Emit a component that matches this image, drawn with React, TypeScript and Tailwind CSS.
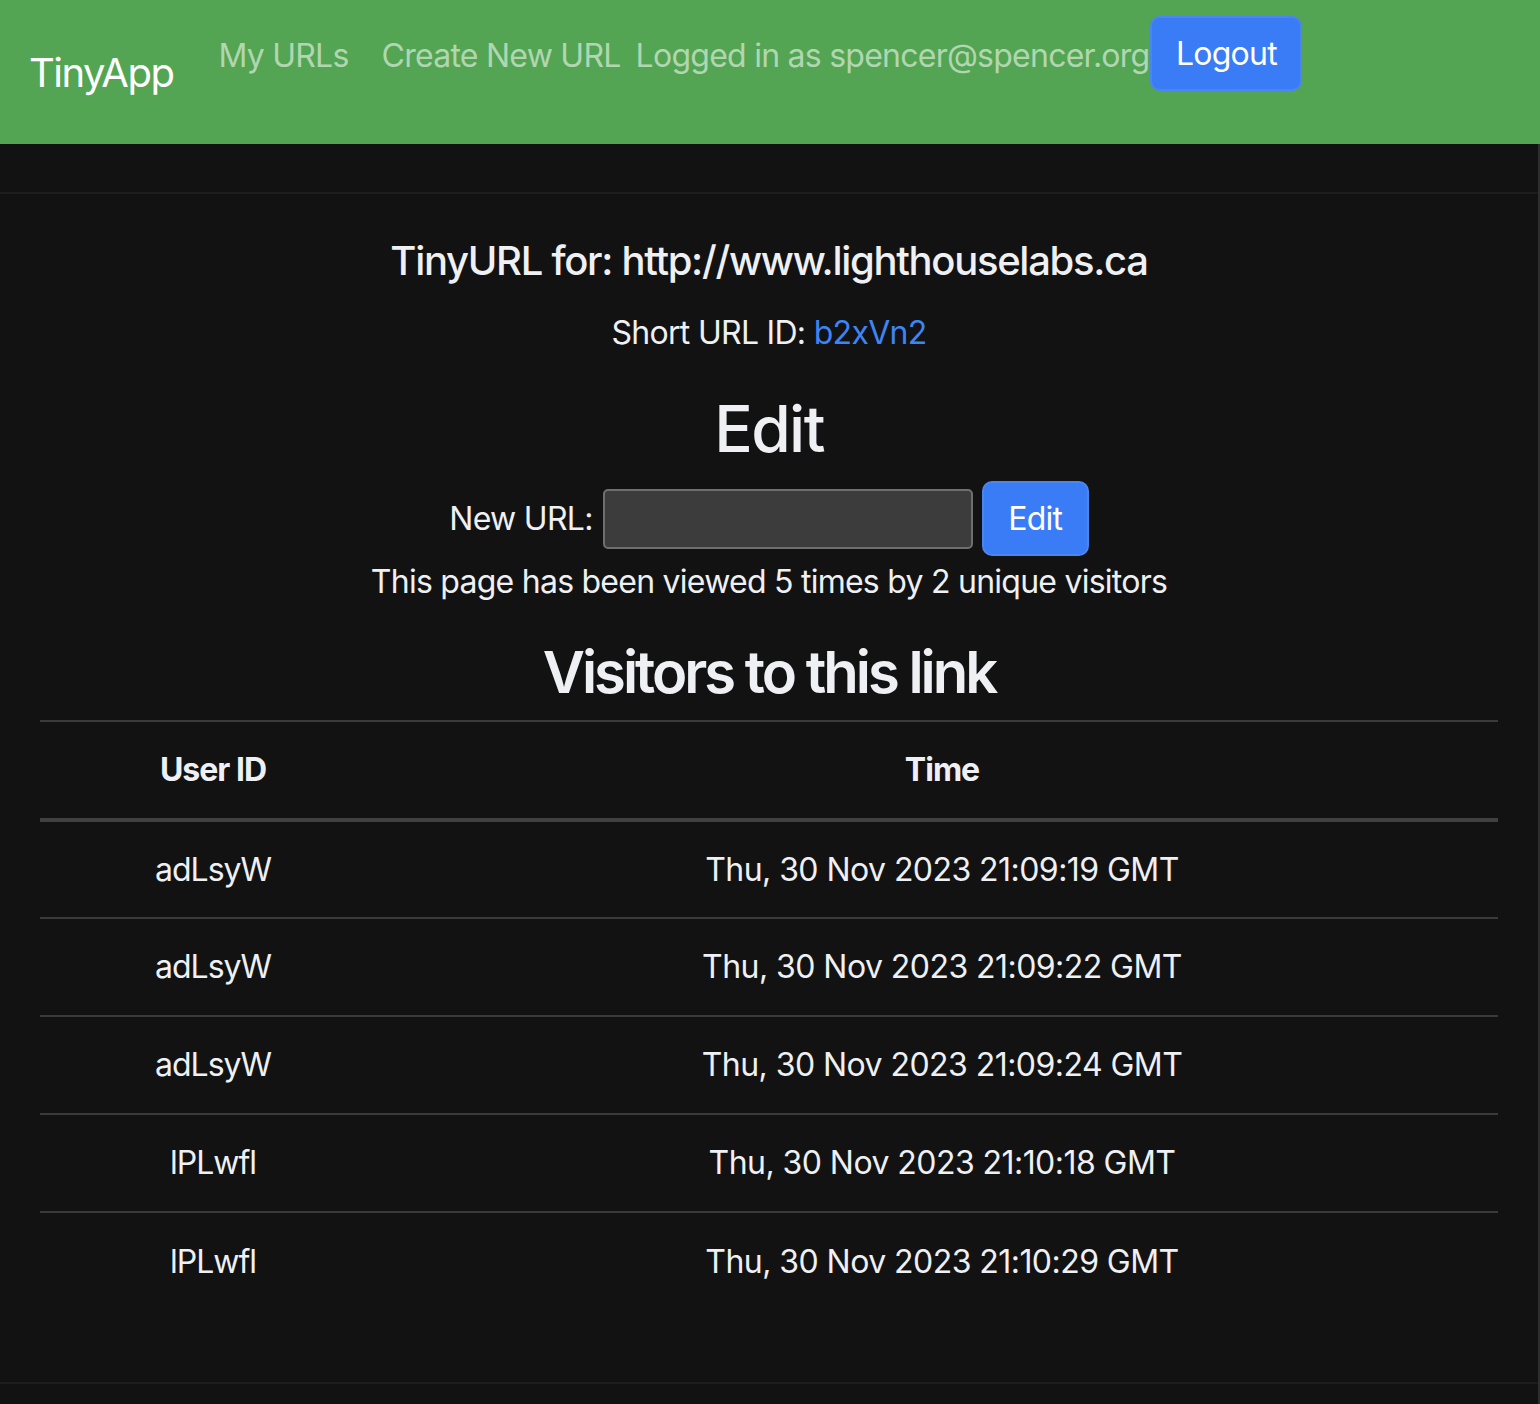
import React from "react";

const rows = [
  ["adLsyW", "Thu, 30 Nov 2023 21:09:19 GMT"],
  ["adLsyW", "Thu, 30 Nov 2023 21:09:22 GMT"],
  ["adLsyW", "Thu, 30 Nov 2023 21:09:24 GMT"],
  ["lPLwfl", "Thu, 30 Nov 2023 21:10:18 GMT"],
  ["lPLwfl", "Thu, 30 Nov 2023 21:10:29 GMT"],
];

export default function App() {
  return (
    <div
      className="min-h-[1404px] w-[1540px] bg-[#121212] text-[#eef0f4]"
      style={{ fontFamily: "Inter, 'Noto Sans', sans-serif" }}
    >
      <nav className="flex h-[144px] items-start bg-[#53a553] pt-[16px]">
        <div className="ml-[29px] self-center text-[40px] leading-[60px] text-white -mt-[14px] tracking-[-1.5px]">
          TinyApp
        </div>
        <div className="ml-[45px] flex items-start text-[32px] leading-[48px] text-[#b1d6b1] tracking-[-0.75px]">
          <a className="py-[16px]">My URLs</a>
          <a className="ml-[33px] py-[16px]">Create New URL</a>
          <span className="ml-[15px] py-[16px]">Logged in as spencer@spencer.org</span>
          <button className="ml-[1px] h-[75px] w-[152px] rounded-[10px] border-2 border-[#4a86f2] bg-[#3a7cf6] text-[32px] leading-[48px] text-white">
            Logout
          </button>
        </div>
      </nav>
      <div className="flex min-h-[1260px] flex-col rounded-tl-[8px] border-r-2 border-[#2e2e2e] bg-[#121212]">
        <div className="h-[50px] border-b-2 border-[#1c1c1c]"></div>
        <div className="flex flex-1 flex-col items-center px-[40px] pb-[72px]">
          <h5 className="mt-[43px] text-[40px] font-medium leading-[48px] tracking-[-1.3px]">
            TinyURL for: http://www.lighthouselabs.ca
          </h5>
          <p className="mt-[24px] text-[32px] leading-[48px] tracking-[-0.7px]">
            Short URL ID: <a className="text-[#3d85f5]">b2xVn2</a>
          </p>
          <h2 className="mt-[33px] text-[64px] font-medium leading-[77px] tracking-[-1.6px]">Edit</h2>
          <div className="mt-[14px] flex items-center">
            <label className="text-[32px] leading-[48px] tracking-[-0.7px]">New URL:</label>
            <input
              className="ml-[10px] h-[60px] w-[370px] rounded-[5px] border-2 border-[#6f6f6f] bg-[#3c3c3c] outline-none"
              type="text"
            />
            <button className="ml-[9px] h-[75px] w-[107px] rounded-[10px] border-2 border-[#4a86f2] bg-[#3a7cf6] text-[32px] leading-[48px] text-white tracking-[-0.7px]">
              Edit
            </button>
          </div>
          <p className="mt-[2px] text-[32px] leading-[48px] tracking-[-0.75px]">
            This page has been viewed 5 times by 2 unique visitors
          </p>
          <h2 className="mt-[31px] text-[58px] font-semibold leading-[70px] tracking-[-3px]">
            Visitors to this link
          </h2>
          <table className="mt-[13px] w-full border-collapse text-[32px] leading-[48px] tracking-[-0.55px]">
            <thead>
              <tr className="h-[99px] border-t-2 border-b-4 border-[#3a3a3a] border-b-[#404040]">
                <th className="w-[346px] text-center font-bold tracking-[-1px]">User ID</th>
                <th className="text-center font-bold tracking-[-1px]">Time</th>
              </tr>
            </thead>
            <tbody>
              {rows.map((r, i) => (
                <tr
                  key={i}
                  className={i < rows.length - 1 ? "h-[98px] border-b-2 border-[#3a3a3a]" : "h-[98px]"}
                >
                  <td className="text-center tracking-[-1px]">{r[0]}</td>
                  <td className="text-center">{r[1]}</td>
                </tr>
              ))}
            </tbody>
          </table>
        </div>
        <div className="h-[22px] border-t-2 border-[#1c1c1c]"></div>
      </div>
    </div>
  );
}
